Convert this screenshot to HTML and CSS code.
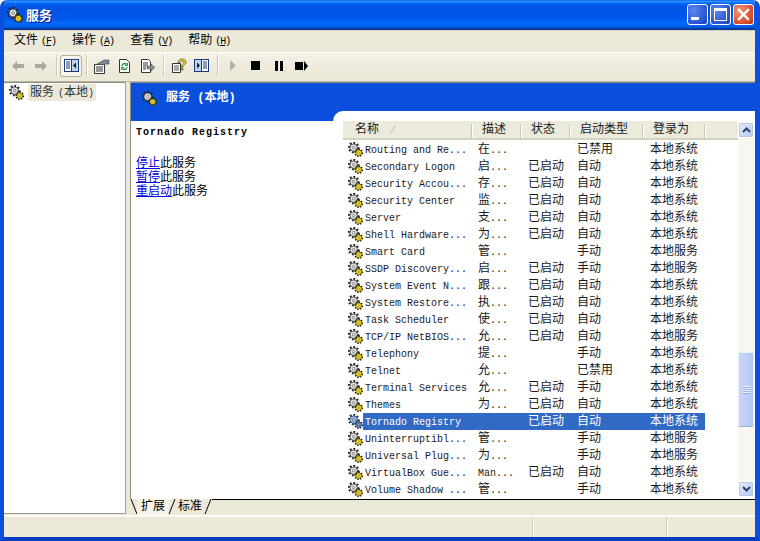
FILE: index.html
```html
<!DOCTYPE html>
<html lang="zh">
<head>
<meta charset="utf-8">
<title>服务</title>
<link rel="stylesheet" href="styles.css">
</head>
<body>
<svg class="defs" width="0" height="0">
  <symbol id="gear" viewBox="0 0 16 16">
    <circle cx="6" cy="6" r="4.9" fill="none" stroke="#222" stroke-width="2.6" stroke-dasharray="1.9 1.8"/>
    <circle cx="6" cy="6" r="3.9" fill="#e8e8e8" stroke="#333" stroke-width=".8"/>
    <circle cx="6" cy="6" r="1.4" fill="#fff" stroke="#444" stroke-width=".7"/>
    <circle cx="11.4" cy="11.4" r="3.7" fill="none" stroke="#2a2500" stroke-width="2" stroke-dasharray="1.5 1.3"/>
    <circle cx="11.4" cy="11.4" r="3" fill="#ffdf10" stroke="#4a3f00" stroke-width=".7"/>
    <circle cx="11.4" cy="11.4" r="1" fill="#fffbc0" stroke="#5a4c00" stroke-width=".5"/>
  </symbol>
  <symbol id="gear-sel" viewBox="0 0 16 16">
    <circle cx="6" cy="6" r="4.9" fill="none" stroke="#1c3560" stroke-width="2.6" stroke-dasharray="1.9 1.8"/>
    <circle cx="6" cy="6" r="3.9" fill="#a8bcdc" stroke="#24406e" stroke-width=".8"/>
    <circle cx="6" cy="6" r="1.4" fill="#dfe8f5" stroke="#24406e" stroke-width=".7"/>
    <circle cx="11.4" cy="11.4" r="3.7" fill="none" stroke="#1c3560" stroke-width="2" stroke-dasharray="1.5 1.3"/>
    <circle cx="11.4" cy="11.4" r="3" fill="#5f86a8" stroke="#24406e" stroke-width=".7"/>
    <circle cx="11.4" cy="11.4" r="1" fill="#c8d8e8" stroke="#24406e" stroke-width=".5"/>
  </symbol>
</svg>
<div class="window">
  <header class="titlebar">
    <svg class="ico16"><use href="#gear"/></svg>
    <span class="title-text">服务</span>
    <div class="winbtns">
      <div class="winbtn"><span class="glyph-min"></span></div>
      <div class="winbtn"><span class="glyph-max"></span></div>
      <div class="winbtn close">
        <svg width="13" height="13" viewBox="0 0 13 13"><path d="M2 2l9 9M11 2l-9 9" stroke="#fff" stroke-width="2.4" stroke-linecap="square"/></svg>
      </div>
    </div>
  </header>

  <nav class="menubar">
    <span>文件<span class="mk">(<u>F</u>)</span></span>
    <span>操作<span class="mk">(<u>A</u>)</span></span>
    <span>查看<span class="mk">(<u>V</u>)</span></span>
    <span>帮助<span class="mk">(<u>H</u>)</span></span>
  </nav>

  <div class="toolbar">
    <div class="tgroup">
      <div class="tbtn"><svg width="14" height="12" viewBox="0 0 14 12"><path d="M6 1L1 6l5 5V8h7V4H6z" fill="#a9a99c"/></svg></div>
      <div class="tbtn"><svg width="14" height="12" viewBox="0 0 14 12"><path d="M8 1l5 5-5 5V8H1V4h7z" fill="#a9a99c"/></svg></div>
    </div>
    <i class="tsep"></i>
    <div class="tgroup">
      <div class="tbtn active"><svg width="15" height="13" viewBox="0 0 15 13"><rect x=".5" y=".5" width="14" height="12" fill="#fff" stroke="#1a3a80"/><rect x="7" y="1" width="7" height="11" fill="#c6d4ea"/><path d="M7.5 1v11" stroke="#1a3a80"/><path d="M2 3h4M2 5h4M2 7h4M2 9h4" stroke="#1a3a80"/><path d="M12 3.500v6L9 6.500z" fill="#10204a"/></svg></div>
    </div>
    <i class="tsep"></i>
    <div class="tgroup">
      <div class="tbtn"><svg width="17" height="16" viewBox="0 0 17 16"><path d="M1.500 6.500h10v9h-10z" fill="#fff" stroke="#333"/><path d="M3 9h7M3 11h7M3 13h7" stroke="#333"/><path d="M4 6l7-4h5v4h-3l-2 1z" fill="#7d8794" stroke="#444" stroke-width=".6"/></svg></div>
      <div class="tbtn"><svg width="13" height="16" viewBox="0 0 13 16"><path d="M1.500 1.500h7l3 3v10h-10z" fill="#fff" stroke="#333"/><path d="M4 8a2.500 2.500 0 0 1 4.500-1.500M9 9a2.500 2.500 0 0 1-4.500 1.500" fill="none" stroke="#1f9a3c" stroke-width="1.300"/><path d="M9.500 5v2.500H7M3.500 12V9.500H6" fill="none" stroke="#1f9a3c"/></svg></div>
      <div class="tbtn"><svg width="15" height="16" viewBox="0 0 15 16"><path d="M1.500 1.500h7l2 2v11h-9z" fill="#fff" stroke="#333"/><path d="M3 5h5M3 7h5M3 9h3M3 11h3" stroke="#333"/><path d="M7 8h4V6l4 3.500-4 3.500v-2H7z" fill="#8a8f8a" stroke="#444" stroke-width=".5"/></svg></div>
    </div>
    <i class="tsep"></i>
    <div class="tgroup">
      <div class="tbtn"><svg width="16" height="16" viewBox="0 0 16 16"><path d="M1.500 5.500h8v9h-8z" fill="#fff" stroke="#333"/><path d="M3 8h5M3 10h5M3 12h5" stroke="#555"/><path d="M7 4.500C7 2 9 1 11 1s4 1 4 3.200c0 2.300-3 2.500-3 4.800h-2c0-3 3-3.200 3-4.800C13 3.400 12 3 11 3S9 3.500 9 4.500zM10 10h2v2h-2z" fill="#f4d81e" stroke="#333" stroke-width=".6"/></svg></div>
      <div class="tbtn"><svg width="15" height="13" viewBox="0 0 15 13"><rect x=".5" y=".5" width="14" height="12" fill="#fff" stroke="#1a3a80"/><rect x="1" y="1" width="6" height="11" fill="#c6d4ea"/><path d="M7.500 1v11" stroke="#1a3a80"/><path d="M9 3h4M9 5h4M9 7h4M9 9h4" stroke="#1a3a80"/><path d="M3 3.500v6l3-3z" fill="#10204a"/></svg></div>
    </div>
    <i class="tsep"></i>
    <div class="tgroup">
      <div class="tbtn"><svg width="7" height="11" viewBox="0 0 7 11"><path d="M1 0l6 5.500L1 11z" fill="#b4b4a6"/></svg></div>
      <div class="tbtn"><svg width="9" height="9" viewBox="0 0 9 9"><rect width="9" height="9" fill="#000"/></svg></div>
      <div class="tbtn"><svg width="8" height="10" viewBox="0 0 8 10"><path d="M0 0h3v10H0zM5 0h3v10H5z" fill="#000"/></svg></div>
      <div class="tbtn"><svg width="13" height="10" viewBox="0 0 13 10"><path d="M0 1h8v8H0zM9 0l4 5-4 5z" fill="#000"/></svg></div>
    </div>
  </div>

  <main class="main">
    <aside class="tree">
      <div class="tree-item">
        <svg class="ico15"><use href="#gear"/></svg>
        <span class="tree-label">服务<span class="en par">(</span>本地<span class="en">)</span></span>
      </div>
    </aside>

    <section class="pane">
      <div class="panel">
        <div class="info">
          <div class="banner">
            <svg class="ico15"><use href="#gear"/></svg>
            <span class="banner-text">服务 (本地)</span>
          </div>
          <div class="desc">
            <h2 class="svc-name">Tornado Registry</h2>
            <p class="actions">
              <a href="#">停止</a>此服务<br>
              <a href="#">暂停</a>此服务<br>
              <a href="#">重启动</a>此服务
            </p>
          </div>
        </div>

        <div class="listarea">
          <div class="list">
            <div class="row head">
              <div class="hcell first">名称<span class="sort">/</span></div>
              <div class="hcell">描述</div>
              <div class="hcell">状态</div>
              <div class="hcell">启动类型</div>
              <div class="hcell">登录为</div>
            </div>
            <div class="row"><div class="c name"><svg class="ico15"><use href="#gear"/></svg><span>Routing and Re...</span></div><div class="c d">在<span class="en">...</span></div><div class="c"></div><div class="c">已禁用</div><div class="c">本地系统</div></div>
            <div class="row"><div class="c name"><svg class="ico15"><use href="#gear"/></svg><span>Secondary Logon</span></div><div class="c d">启<span class="en">...</span></div><div class="c">已启动</div><div class="c">自动</div><div class="c">本地系统</div></div>
            <div class="row"><div class="c name"><svg class="ico15"><use href="#gear"/></svg><span>Security Accou...</span></div><div class="c d">存<span class="en">...</span></div><div class="c">已启动</div><div class="c">自动</div><div class="c">本地系统</div></div>
            <div class="row"><div class="c name"><svg class="ico15"><use href="#gear"/></svg><span>Security Center</span></div><div class="c d">监<span class="en">...</span></div><div class="c">已启动</div><div class="c">自动</div><div class="c">本地系统</div></div>
            <div class="row"><div class="c name"><svg class="ico15"><use href="#gear"/></svg><span>Server</span></div><div class="c d">支<span class="en">...</span></div><div class="c">已启动</div><div class="c">自动</div><div class="c">本地系统</div></div>
            <div class="row"><div class="c name"><svg class="ico15"><use href="#gear"/></svg><span>Shell Hardware...</span></div><div class="c d">为<span class="en">...</span></div><div class="c">已启动</div><div class="c">自动</div><div class="c">本地系统</div></div>
            <div class="row"><div class="c name"><svg class="ico15"><use href="#gear"/></svg><span>Smart Card</span></div><div class="c d">管<span class="en">...</span></div><div class="c"></div><div class="c">手动</div><div class="c">本地服务</div></div>
            <div class="row"><div class="c name"><svg class="ico15"><use href="#gear"/></svg><span>SSDP Discovery...</span></div><div class="c d">启<span class="en">...</span></div><div class="c">已启动</div><div class="c">手动</div><div class="c">本地服务</div></div>
            <div class="row"><div class="c name"><svg class="ico15"><use href="#gear"/></svg><span>System Event N...</span></div><div class="c d">跟<span class="en">...</span></div><div class="c">已启动</div><div class="c">自动</div><div class="c">本地系统</div></div>
            <div class="row"><div class="c name"><svg class="ico15"><use href="#gear"/></svg><span>System Restore...</span></div><div class="c d">执<span class="en">...</span></div><div class="c">已启动</div><div class="c">自动</div><div class="c">本地系统</div></div>
            <div class="row"><div class="c name"><svg class="ico15"><use href="#gear"/></svg><span>Task Scheduler</span></div><div class="c d">使<span class="en">...</span></div><div class="c">已启动</div><div class="c">自动</div><div class="c">本地系统</div></div>
            <div class="row"><div class="c name"><svg class="ico15"><use href="#gear"/></svg><span>TCP/IP NetBIOS...</span></div><div class="c d">允<span class="en">...</span></div><div class="c">已启动</div><div class="c">自动</div><div class="c">本地服务</div></div>
            <div class="row"><div class="c name"><svg class="ico15"><use href="#gear"/></svg><span>Telephony</span></div><div class="c d">提<span class="en">...</span></div><div class="c"></div><div class="c">手动</div><div class="c">本地系统</div></div>
            <div class="row"><div class="c name"><svg class="ico15"><use href="#gear"/></svg><span>Telnet</span></div><div class="c d">允<span class="en">...</span></div><div class="c"></div><div class="c">已禁用</div><div class="c">本地系统</div></div>
            <div class="row"><div class="c name"><svg class="ico15"><use href="#gear"/></svg><span>Terminal Services</span></div><div class="c d">允<span class="en">...</span></div><div class="c">已启动</div><div class="c">手动</div><div class="c">本地系统</div></div>
            <div class="row"><div class="c name"><svg class="ico15"><use href="#gear"/></svg><span>Themes</span></div><div class="c d">为<span class="en">...</span></div><div class="c">已启动</div><div class="c">自动</div><div class="c">本地系统</div></div>
            <div class="row selected"><div class="c name"><svg class="ico15"><use href="#gear-sel"/></svg><span>Tornado Registry</span></div><div class="c d"></div><div class="c">已启动</div><div class="c">自动</div><div class="c">本地系统</div></div>
            <div class="row"><div class="c name"><svg class="ico15"><use href="#gear"/></svg><span>Uninterruptibl...</span></div><div class="c d">管<span class="en">...</span></div><div class="c"></div><div class="c">手动</div><div class="c">本地服务</div></div>
            <div class="row"><div class="c name"><svg class="ico15"><use href="#gear"/></svg><span>Universal Plug...</span></div><div class="c d">为<span class="en">...</span></div><div class="c"></div><div class="c">手动</div><div class="c">本地服务</div></div>
            <div class="row"><div class="c name"><svg class="ico15"><use href="#gear"/></svg><span>VirtualBox Gue...</span></div><div class="c d"><span class="en">Man...</span></div><div class="c">已启动</div><div class="c">自动</div><div class="c">本地系统</div></div>
            <div class="row"><div class="c name"><svg class="ico15"><use href="#gear"/></svg><span>Volume Shadow ...</span></div><div class="c d">管<span class="en">...</span></div><div class="c"></div><div class="c">手动</div><div class="c">本地系统</div></div>
          </div>
          <div class="scrollbar">
            <div class="sbtn"><svg width="9" height="6" viewBox="0 0 9 6"><path d="M1 5l3.500-3.500L8 5" fill="none" stroke="#2f4570" stroke-width="2"/></svg></div>
            <div class="strack">
              <div class="thumb"><span class="grip"></span></div>
            </div>
            <div class="sbtn"><svg width="9" height="6" viewBox="0 0 9 6"><path d="M1 1l3.500 3.500L8 1" fill="none" stroke="#2f4570" stroke-width="2"/></svg></div>
          </div>
        </div>
      </div>
      <div class="tabs">
        <svg class="slant" width="8" height="16" viewBox="0 0 8 16"><path d="M1 0l6 15" stroke="#000" fill="none"/></svg>
        <div class="tab on">扩展</div>
        <svg class="slant" width="8" height="16" viewBox="0 0 8 16"><path d="M7 0l-6 15" stroke="#000" fill="none"/></svg>
        <div class="tab">标准</div>
        <svg class="slant" width="8" height="16" viewBox="0 0 8 16"><path d="M7 0l-6 15" stroke="#000" fill="none"/></svg>
        <div class="tabfill"></div>
      </div>
    </section>
  </main>

  <footer class="statusbar">
    <div class="st st1"></div>
    <div class="st st2"></div>
    <div class="st st3"></div>
  </footer>
</div>
</body>
</html>
```

FILE: styles.css
```css
* { box-sizing: border-box; }
html, body { margin: 0; padding: 0; background: #fff; overflow: hidden; }
body { width: 760px; height: 541px; font: 12px/14px "Liberation Mono", "Noto Sans CJK SC", monospace; color: #000; }
.defs { position: absolute; }
.en { font-size: 10px; }
.par { margin-left: 4px; }
.mk { font-size: 10px; margin-left: 3px; letter-spacing: -1px; }

.window {
  width: 760px; height: 541px;
  display: flex; flex-direction: column;
  background: #ECE9D8;
  border-radius: 7px 7px 0 0;
  border-left: 4px solid #0a50dc;
  border-right: 5px solid #0a50dc;
  border-bottom: 4px solid #0a3fc4;
  overflow: hidden;
}

.titlebar {
  height: 30px; flex: none;
  margin: 0 -5px 0 -4px;
  padding: 0 6px 0 7px;
  display: flex; align-items: center;
  background: linear-gradient(180deg, #0058EE 0, #3593FF 4%, #288EFF 6%, #127DFF 8%, #036FFC 10%, #0262EE 14%, #0057E5 20%, #0054E3 24%, #0055EB 56%, #005BF5 66%, #026AFE 76%, #0062EF 86%, #0052D6 92%, #0040AB 94%, #003092 100%);
}
.ico16 { width: 16px; height: 16px; flex: none; }
.ico15 { width: 15px; height: 15px; flex: none; display: block; }
.title-text {
  margin-left: 3px; color: #fff; font: bold 13px/16px "Noto Sans CJK SC", sans-serif;
  text-shadow: 1px 1px 0 #0f1089;
}
.winbtns { margin-left: auto; display: flex; gap: 2px; margin-bottom: 2px; }
.winbtn {
  width: 21px; height: 21px; border: 1px solid #fff; border-radius: 3px;
  background: radial-gradient(circle at 30% 30%, #5c86ee, #2a54d0 70%, #1c3fb8);
  position: relative; display: flex; align-items: center; justify-content: center;
}
.winbtn.close { background: radial-gradient(circle at 30% 30%, #ec9a80, #d9502c 65%, #b83010); }
.glyph-min { width: 8px; height: 3px; background: #fff; margin: 8px 5px 0 0; }
.glyph-max { width: 13px; height: 13px; border: 1px solid #fff; border-top-width: 3px; }

.menubar {
  height: 23px; flex: none; display: flex; align-items: center; gap: 16px;
  padding: 1px 0 0 10px; border-bottom: 1px solid #fff; box-shadow: 0 1px 0 #d8d2bd inset;
  background: #ECE9D8;
  white-space: nowrap;
}

.toolbar {
  height: 29px; flex: none; display: flex; align-items: center;
  padding: 0 0 3px 2px;
  background: linear-gradient(180deg, #f4f2e8, #ece9d8 70%);
  border-bottom: 1px solid #b8b4a0;
}
.tgroup { display: flex; }
.tbtn { width: 23px; height: 22px; display: flex; align-items: center; justify-content: center; }
.tbtn.active { width: 22px; background: #f6f5ef; border: 1px solid #b5b09c; border-radius: 3px; }
.tsep { width: 1px; height: 21px; background: #cfcbb6; margin: 0 3px 0 4px; box-shadow: 1px 0 0 #fff; }

.main { flex: 1; min-height: 0; display: flex; }
.tree {
  width: 122px; flex: none; background: #fff;
  border: 1px solid #9d9b8e; border-left: 0; border-top-color: #8f8d80;
  margin-bottom: 1px;
  padding: 1px 0 0 5px;
}
.tree-item { display: flex; align-items: center; gap: 4px; }
.tree-label { background: #ece9d8; height: 17px; line-height: 18px; padding: 0 2px; color: #333; }
.pane { flex: 1; min-width: 0; display: flex; flex-direction: column; margin-left: 4px; }
.panel {
  height: 417px; flex: none; display: flex;
  background: #0a50dc; border-left: 1px solid #8f8d80; border-top: 1px solid #8f8d80;
}
.info { width: 202px; flex: none; display: flex; flex-direction: column; }
.banner {
  height: 38px; flex: none; display: flex; align-items: center; gap: 9px;
  padding: 0 0 8px 11px;
}
.banner-text { color: #fff; font: bold 12px/14px "Liberation Mono", "Noto Sans CJK SC", monospace; }
.desc { flex: 1; background: #fff; padding: 6px 0 0 5px; }
.svc-name { margin: 0; font: bold 10px/12px "Liberation Mono", monospace; letter-spacing: 1px; }
.actions { margin: 18px 0 0; line-height: 14px; }
.actions a { color: #0000e0; text-decoration: underline; }

.listarea {
  flex: 1; min-width: 0; display: flex; align-items: flex-start;
  margin-top: 28px;
  background: #fff; border-top-left-radius: 10px;
  padding: 10px 1px 0 10px;
}
.list { width: 395px; flex: none; }
.row { display: grid; grid-template-columns: 129px 49px 49px 73px 62px; height: 17px; }
.c { font-size: 12px; line-height: 17px; padding: 1px 0 0 7px; white-space: nowrap; overflow: hidden; color: #1a1a1a; }
.c.d { padding-left: 6px; }
.c.name { display: flex; align-items: center; padding: 0 0 0 5px; font-size: 10px; }
.c.name span { flex: 1; padding: 1px 0 0 2px; align-self: stretch; }
.selected .c { background: #316AC5; color: #fff; }
.selected .c.name { background: none; }
.selected .c.name span { background: #316AC5; }

.head { height: 19px; margin-bottom: 1px; background: #EBEADB; border-bottom: 2px solid #d6d2c2; grid-template-columns: 129px 49px 49px 73px 62px 33px; }
.hcell { font-size: 12px; line-height: 19px; padding-left: 10px; position: relative; color: #1a1a1a; }
.hcell.first { padding-left: 12px; }
.hcell::after { content: ""; position: absolute; right: 0; top: 3px; bottom: 3px; width: 1px; background: #c9c5b2; box-shadow: 1px 0 0 #fff; }
.sort { margin-left: 11px; color: #b8b4a0; font-size: 9px; font-style: italic; }

.scrollbar { width: 16px; height: 375px; margin-top: 1px; flex: none; display: flex; flex-direction: column; }
.sbtn {
  height: 16px; flex: none; display: flex; align-items: center; justify-content: center;
  background: linear-gradient(135deg, #e4ecfb, #b6c9f2);
  border: 1px solid #fff; border-radius: 2px; box-shadow: 0 0 0 1px #b7c7e8 inset;
}
.strack { flex: 1; display: flex; flex-direction: column; justify-content: flex-end; background: #f7f6f0; padding-bottom: 54px; }
.thumb {
  height: 75px; display: flex; align-items: center; justify-content: center;
  background: linear-gradient(90deg, #c8d7f7, #b3c8f4);
  border: 1px solid #e8eefb; border-bottom-color: #9cb0d8; border-radius: 2px;
}
.grip { width: 7px; height: 8px; background: repeating-linear-gradient(180deg, #eef3fd 0 1px, #9ab0dc 1px 2px); }

.tabs { height: 16px; flex: none; display: flex; align-items: stretch; }
.slant { flex: none; display: block; }
.tab { line-height: 17px; text-align: center; width: 30px; margin: 0 -1px; }
.tab.on { width: 32px; background: #f6f4ea; }
.tabfill { flex: 1; border-top: 1px solid #000; }

.statusbar {
  flex: 1; min-height: 22px; max-height: 22px; display: flex;
  border-top: 1px solid #fff; background: #ECE9D8; box-shadow: 0 1px 0 #f8f7f0 inset;
}
.st { border-right: 1px solid #cfcbb6; box-shadow: 1px 0 0 #fff; margin-top: 2px; }
.st1 { width: 529px; }
.st2 { width: 134px; }
.st3 { flex: 1; border-right: 0; box-shadow: none; }
```
